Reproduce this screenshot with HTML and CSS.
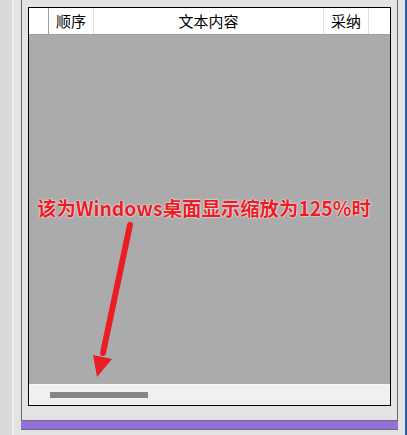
FILE: index.html
```html
<!DOCTYPE html>
<html lang="zh-CN">
<head>
    <meta charset="UTF-8">
    <meta name="viewport" content="width=device-width, initial-scale=1.0">
    <title>文本内容列表</title>
    <link rel="stylesheet" href="styles.css">
</head>
<body>
    <div class="page">
        <div class="side-strip"></div>

        <div class="main">
            <div class="column">
                <div class="panel">
                    <div class="grid">
                        <div class="grid-header">
                            <div class="cell cell-row"></div>
                            <div class="cell cell-order">顺序</div>
                            <div class="cell cell-text">文本内容</div>
                            <div class="cell cell-accept">采纳</div>
                            <div class="cell cell-fill"></div>
                        </div>

                        <div class="grid-body">
                            <div class="note">该为Windows桌面显示缩放为125%时</div>
                            <svg class="arrow" width="361" height="349" viewBox="0 0 361 349">
                                <line x1="101" y1="190" x2="74" y2="318" stroke="#ec1c24" stroke-width="6" stroke-linecap="round"/>
                                <polygon points="64,320 83,324 68,342" fill="#ec1c24"/>
                            </svg>
                        </div>

                        <div class="hscroll">
                            <div class="hscroll-thumb"></div>
                        </div>
                    </div>
                </div>

                <div class="splitter"></div>

                <div class="panel panel-lower"></div>
            </div>
        </div>

        <div class="edge"></div>
    </div>
</body>
</html>
```

FILE: styles.css
```css
* {
    margin: 0;
    padding: 0;
    box-sizing: border-box;
}

body {
    font-family: "Noto Sans CJK SC", "Noto Sans", sans-serif;
    background-color: #e3e3e3;
    width: 407px;
    height: 435px;
    overflow: hidden;
}

.page {
    display: flex;
    height: 435px;
}

.side-strip {
    width: 14px;
    background-color: #d9d9d9;
    border-right: 2px solid #eeeeee;
}

.main {
    flex: 1;
    padding-left: 7px;
    background-color: #e3e3e3;
}

.edge {
    width: 2px;
    background-color: #2b5ea6;
}

.column {
    width: 377px;
    display: flex;
    flex-direction: column;
}

.panel {
    border-left: 1px solid #6b6b6b;
    border-right: 1px solid #6b6b6b;
    border-bottom: 1px solid #6b6b6b;
    padding: 7px 6px 14px 6px;
}

.panel-lower {
    flex: 1;
    border-top: 1px solid #6b6b6b;
    border-bottom: none;
    padding: 0;
    height: 6px;
}

.splitter {
    height: 8px;
    background-color: #9370db;
}

.grid {
    border: 1px solid #000;
    width: 363px;
    background-color: #ababab;
}

.grid-header {
    display: flex;
    height: 27px;
    background-color: #fff;
    border-bottom: 1px solid #a0a0a0;
    font-size: 15px;
    line-height: 26px;
    color: #000;
}

.cell {
    text-align: center;
    border-right: 1px solid #e1e1e1;
}

.cell-row {
    width: 20px;
    border-right-color: #a0a0a0;
}

.cell-order {
    width: 45px;
}

.cell-text {
    width: 230px;
}

.cell-accept {
    width: 45px;
}

.cell-fill {
    flex: 1;
    border-right: none;
}

.grid-body {
    position: relative;
    height: 349px;
}

.note {
    position: absolute;
    left: 8px;
    top: 158px;
    font-size: 19.4px;
    font-weight: bold;
    color: #ec1c24;
    white-space: nowrap;
    text-shadow: 0 0 2px #fff, 0 0 1px #fff;
}

.arrow {
    position: absolute;
    left: 0;
    top: 0;
}

.hscroll {
    height: 21px;
    background-color: #f0f0f0;
    border-top: 1px solid #f7f7f7;
    padding: 7px 0 0 21px;
}

.hscroll-thumb {
    width: 98px;
    height: 6px;
    background-color: #858585;
}
```
